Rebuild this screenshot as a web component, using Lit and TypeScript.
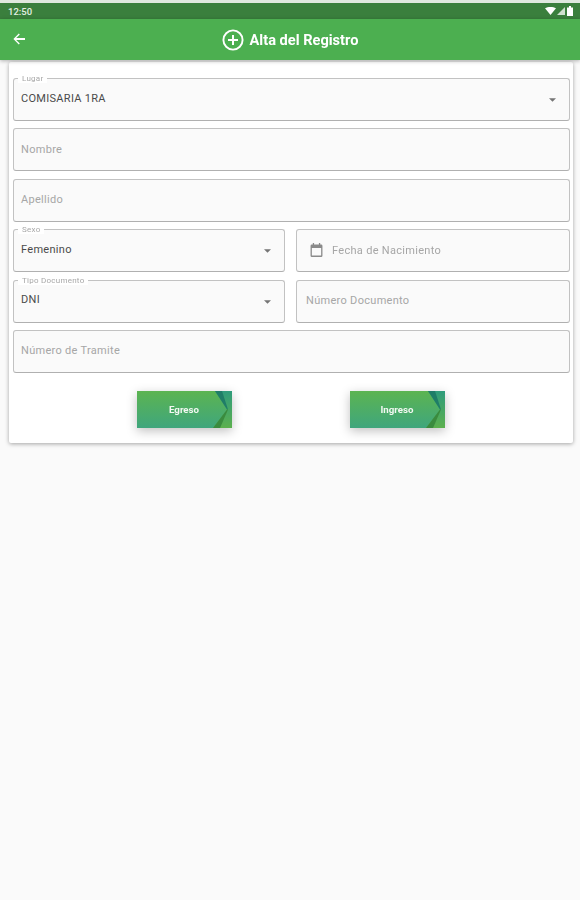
import { LitElement, html, css, svg } from "lit";
import { customElement } from "lit/decorators.js";

const caret = html`<svg class="caret" width="7" height="4" viewBox="0 0 10 5"><path d="M0 0h10L5 5z" fill="#757575"/></svg>`;

@customElement("app-root")
export class AppRoot extends LitElement {
  static styles = css`
    :host {
      display: block;
      height: 900px;
      overflow: hidden;
      background: #fafafa;
      font-family: Roboto, "Liberation Sans", sans-serif;
      color: #333;
    }
    .page {
      height: 900px;
      filter: blur(0.6px);
    }
    .top-strip {
      height: 3px;
      background: #dfe8df;
    }
    .status {
      height: 16px;
      background: #3a7f3d;
      color: #e4efe4;
      font-size: 9.5px;
      font-weight: 500;
      display: flex;
      align-items: center;
      justify-content: space-between;
      padding: 0 6px 0 8px;
    }
    .status-icons {
      display: flex;
      align-items: center;
      gap: 1px;
    }
    .appbar {
      height: 41px;
      background: #4caf50;
      box-shadow: 0 1px 4px rgba(0, 0, 0, 0.3);
      display: flex;
      align-items: center;
      justify-content: center;
      position: relative;
      color: #fff;
    }
    .back {
      position: absolute;
      left: 12px;
      top: 13px;
    }
    .title {
      display: flex;
      align-items: center;
      gap: 6px;
      font-size: 14.6px;
      font-weight: 700;
      margin-top: 1px;
    }
    .card {
      margin: 2px 7px 0 9px;
      height: 381px;
      box-sizing: border-box;
      background: #fff;
      box-shadow: 0 1px 4px rgba(0, 0, 0, 0.35);
      border-radius: 2px;
      padding: 16px 3px 0 4px;
      display: flex;
      flex-direction: column;
      gap: 7.4px;
    }
    .row {
      display: flex;
      gap: 11px;
    }
    .field {
      position: relative;
      flex: 1;
      box-sizing: border-box;
      height: 43px;
      border: 1px solid #c2c2c2;
      border-bottom-color: #b0b0b0;
      border-radius: 3px;
      background: #fafafa;
      display: flex;
      align-items: center;
      padding: 0 7px 1px;
      font-size: 11px;
      letter-spacing: 0.3px;
    }
    .field.half {
      flex: 0 0 272px;
    }
    .field.inset {
      padding-left: 9px;
    }
    .field.date {
      padding-left: 13px;
      gap: 9px;
    }
    .legend {
      position: absolute;
      left: 4px;
      top: -4px;
      padding: 0 4px;
      font-size: 8px;
      line-height: 8px;
      letter-spacing: 0.25px;
      color: #a8a8a8;
      background: #fff;
    }
    .hint {
      color: #a6a6a6;
    }
    .value {
      flex: 1;
      color: #4a4a4a;
      margin-bottom: 2px;
    }
    .caret {
      margin: 2px 6px 0 0;
    }
    .actions {
      display: flex;
      margin-top: 10.6px;
      padding-left: 124px;
      gap: 118px;
    }
    .btn {
      position: relative;
      width: 95px;
      height: 37px;
      display: flex;
      align-items: center;
      justify-content: center;
      padding-top: 1px;
      box-sizing: border-box;
      background: linear-gradient(#5cb451, #3fa67d);
      box-shadow: 0 3px 10px rgba(0, 0, 0, 0.25);
      color: #f2f8f2;
      font-size: 9.7px;
      font-weight: 700;
    }
    .btn span {
      margin-left: -1px;
    }
    .chevron {
      position: absolute;
      right: 0;
      top: 0;
    }
  `;

  private field(hint: string, inset = false) {
    return html`<div class="field ${inset ? "inset" : ""}"><span class="hint">${hint}</span></div>`;
  }

  private select(legend: string, value: string, half = false) {
    return html`<div class="field ${half ? "half" : ""}">
      <span class="legend">${legend}</span>
      <span class="value">${value}</span>
      ${caret}
    </div>`;
  }

  private button(label: string) {
    return html`<div class="btn">
      <span>${label}</span>
      <svg class="chevron" width="19" height="37" viewBox="0 0 19 37">
        <defs>
          <linearGradient id="rev-${label}" x1="0" y1="0" x2="0" y2="1">
            <stop offset="0" stop-color="#2f9c7c" />
            <stop offset="1" stop-color="#5cb04e" />
          </linearGradient>
        </defs>
        ${svg`<path d="M2 0H19V37H0L14 18.5z" fill="url(#rev-${label})"/>
        <path d="M2 0H9L15 18.5H14z" fill="#1f7d68"/>
        <path d="M0 37H7L15 18.5H14z" fill="#3a8b3e"/>`}
      </svg>
    </div>`;
  }

  render() {
    return html`<div class="page">
      <div class="top-strip"></div>
      <div class="status">
        <span>12:50</span>
        <span class="status-icons">
          <svg width="11" height="8" viewBox="0 0 11 8"><path d="M0 1.2C3-.4 8-.4 11 1.2L5.5 8z" fill="#fff"/></svg>
          <svg width="8" height="8" viewBox="0 0 8 8"><path d="M8 0V8H0z" fill="#cfe0cf"/></svg>
          <svg width="8" height="10" viewBox="0 0 8 10"><path d="M1 1.5h2V0h2v1.5h2V10H1z" fill="#fff"/></svg>
        </span>
      </div>
      <div class="appbar">
        <svg class="back" width="14" height="14" viewBox="0 0 14 14"><path d="M13 6H4.2l3.6-3.6L6.8 1.4 1.4 7l5.4 5.6 1-1L4.2 8H13z" fill="#fff"/></svg>
        <div class="title">
          <svg width="22" height="22" viewBox="0 0 22 22">
            <circle cx="11" cy="11" r="9.6" fill="none" stroke="#fff" stroke-width="1.9"/>
            <path d="M11 6v10M6 11h10" stroke="#fff" stroke-width="2"/>
          </svg>
          <span>Alta del Registro</span>
        </div>
      </div>
      <div class="card">
        <div class="row">${this.select("Lugar", "COMISARIA 1RA")}</div>
        <div class="row">${this.field("Nombre")}</div>
        <div class="row">${this.field("Apellido")}</div>
        <div class="row">
          ${this.select("Sexo", "Femenino", true)}
          <div class="field date">
            <svg width="13" height="14" viewBox="0 0 14 15"><path d="M3 0v1.6H2A1.5 1.5 0 0 0 .6 3v10.4A1.5 1.5 0 0 0 2 15h10a1.5 1.5 0 0 0 1.4-1.6V3A1.5 1.5 0 0 0 12 1.6h-1V0H9.6v1.6H4.4V0zM2 5.4h10v8H2z" fill="#8a8a8a"/></svg>
            <span class="hint">Fecha de Nacimiento</span>
          </div>
        </div>
        <div class="row">
          ${this.select("Tipo Documento", "DNI", true)}
          ${this.field("Número Documento", true)}
        </div>
        <div class="row">${this.field("Número de Tramite")}</div>
        <div class="actions">
          ${this.button("Egreso")}
          ${this.button("Ingreso")}
        </div>
      </div>
    </div>`;
  }
}
